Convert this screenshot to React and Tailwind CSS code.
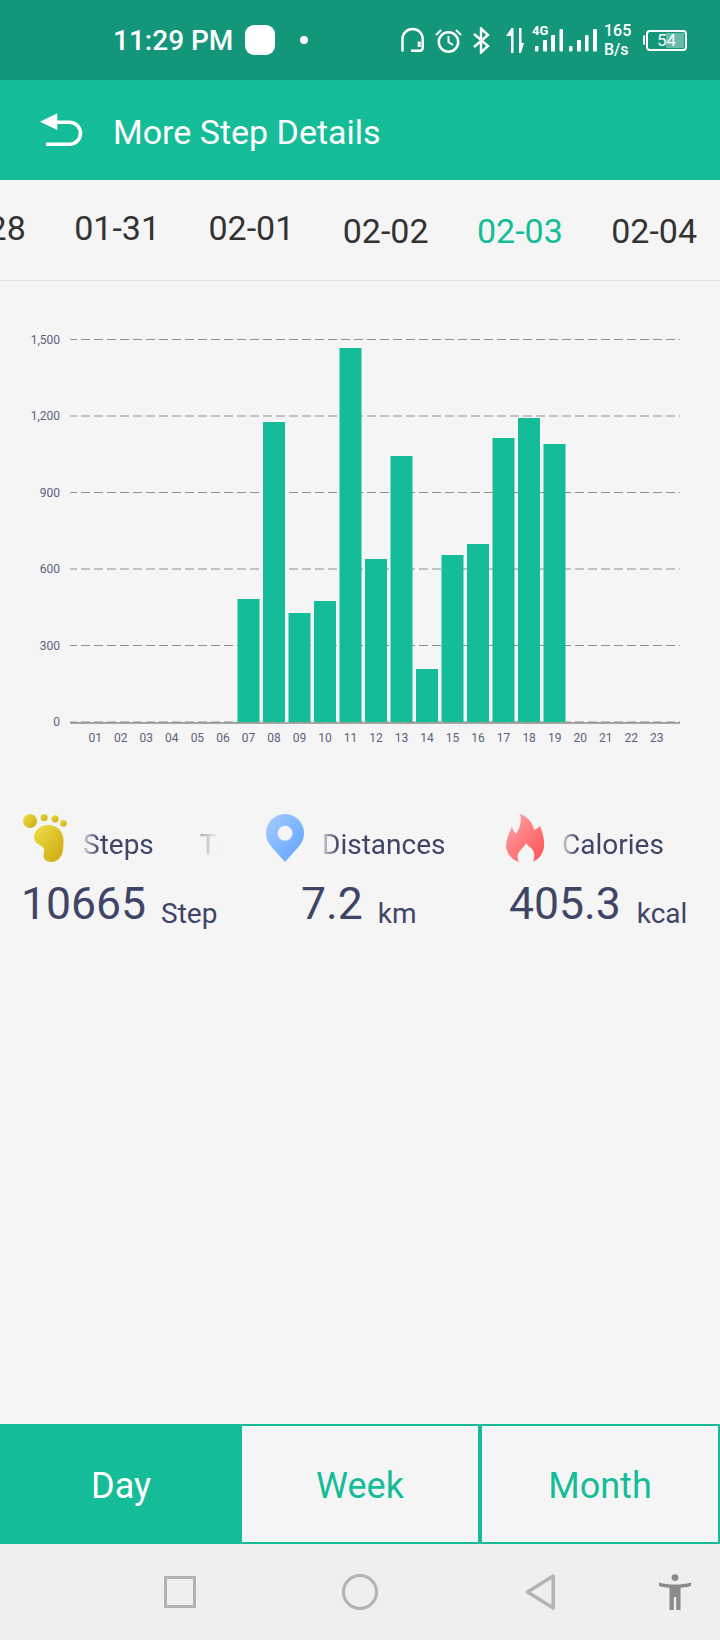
const DATES = [
  { label: '01-28', lift: true },
  { label: '01-31', lift: true },
  { label: '02-01', lift: true },
  { label: '02-02' },
  { label: '02-03', active: true },
  { label: '02-04' },
]

// bar tops in page pixels, hours 07 to 19
const BAR_TOPS = [599, 422, 613, 601, 348, 559, 456, 669, 555, 544, 438, 418, 444]
const Y_LABELS = ['1,500', '1,200', '900', '600', '300', '0']
const CHART_TOP = 281
const BASE_Y = 722 - CHART_TOP

function StatusIcons() {
  return (
    <div className="ml-auto mr-[33px] flex items-center">
      {/* headset */}
      <svg width="24" height="26" viewBox="0 0 24 26" fill="none" stroke="white" strokeWidth="2.5">
        <path d="M1.5 24.5V12A10.1 10.1 0 0 1 21.7 12V20.5C21.7 22.5 20.7 23.7 18.7 23.7H10" />
        <path d="M18.2 14.5V20" strokeWidth="3" />
      </svg>
      {/* alarm */}
      <svg className="ml-[10px]" width="27" height="25" viewBox="0 0 27 25" fill="none" stroke="white" strokeWidth="2.5">
        <circle cx="13.5" cy="14" r="9.7" />
        <path d="M13.5 8V14L18 17" strokeWidth="2" />
        <path d="M1 7L6 2M26 7L21 2" strokeWidth="2" />
      </svg>
      {/* bluetooth */}
      <svg className="ml-[11px]" width="17" height="27" viewBox="0 0 17 27" fill="none" stroke="white" strokeWidth="2.4">
        <path d="M1 7L15 19L8 25.5V1.5L15 8L1 20" />
      </svg>
      {/* data arrows */}
      <svg className="ml-4" width="18" height="25" viewBox="0 0 18 25" fill="white">
        <path d="M5.5 0L0 8H5V25H7.5V0Z" />
        <path d="M13 0H15.5V15H18L15 25H13Z" />
      </svg>
      {/* signal */}
      <svg className="ml-2 -mt-[2px]" width="66" height="28" viewBox="0 0 66 28" fill="white">
        <text x="0" y="10" fontSize="13" fontWeight="700">4G</text>
        <rect x="3" y="21" width="3.5" height="5.5" rx="1" />
        <rect x="11" y="15" width="4" height="11.5" rx="1" />
        <rect x="19" y="10" width="4" height="16.5" rx="1" />
        <rect x="27.5" y="4" width="3.5" height="22.5" rx="1" />
        <rect x="37" y="21" width="3.5" height="5.5" rx="1" />
        <rect x="45" y="15" width="4" height="11.5" rx="1" />
        <rect x="53" y="10" width="3.5" height="16.5" rx="1" />
        <rect x="61" y="4" width="4" height="22.5" rx="1" />
      </svg>
      <div className="ml-[6px] w-[27px] whitespace-nowrap text-[16px] font-medium leading-[19px] text-white">
        <div>165</div>
        <div>B/s</div>
      </div>
      {/* battery */}
      <div className="ml-[12px] flex items-center">
        <div className="h-[10px] w-[2px] rounded-l-sm bg-white" />
        <div className="relative ml-[1px] flex h-[21px] w-[41px] items-center rounded-[4px] border-2 border-white">
          <div className="absolute bottom-[1px] left-[18px] right-[1px] top-[1px] bg-white/35" />
          <span className="relative ml-[9px] text-[17px] leading-none text-white">54</span>
        </div>
      </div>
    </div>
  )
}

function BarChart() {
  return (
    <svg className="block w-full" width="720" height="480" viewBox="0 0 720 480">
      {Y_LABELS.map((label, i) => {
        const y = 339.5 + i * 76.5 - CHART_TOP
        return (
          <g key={label}>
            <line x1="70" x2="680" y1={y} y2={y} stroke="#8f8f8f" strokeWidth="1" strokeDasharray="9 4" strokeDashoffset="2" />
            <text x="60" y={y + 4} textAnchor="end" fontSize="12" fill="#5d6180">{label}</text>
          </g>
        )
      })}
      <line x1="70" x2="680" y1={BASE_Y + 1} y2={BASE_Y + 1} stroke="#8c8c8c" strokeWidth="1.5" />
      {BAR_TOPS.map((top, i) => (
        <rect
          key={i}
          x={237.5 + i * 25.5}
          y={top - CHART_TOP}
          width="22"
          height={722 - top}
          fill="#14bc97"
        />
      ))}
      {Array.from({ length: 23 }, (_, i) => (
        <text key={i} x={95.3 + i * 25.52} y={742 - CHART_TOP} textAnchor="middle" fontSize="12" fill="#5d6180">
          {String(i + 1).padStart(2, '0')}
        </text>
      ))}
    </svg>
  )
}

function FootIcon() {
  return (
    <svg width="44" height="48" viewBox="0 0 44 48">
      <defs>
        <linearGradient id="foot" x1="0" y1="0" x2="1" y2="1">
          <stop offset="0" stopColor="#ebe04a" />
          <stop offset="1" stopColor="#cda70c" />
        </linearGradient>
      </defs>
      <g fill="url(#foot)">
        <circle cx="7" cy="7" r="7" />
        <circle cx="21" cy="3.6" r="3.6" />
        <circle cx="32" cy="4.8" r="3.6" />
        <circle cx="40.3" cy="9.3" r="3.4" />
        <path d="M11 22C12 15 19 11 25 11C34 11 40.5 17 40.5 27C40.5 33 40 37 39 40C37 45 33 48 28.5 48C23 48 20 45 20.5 41C21 37 22 35.5 20 33C17 31 10.5 29 11 22Z" />
      </g>
    </svg>
  )
}

function PinIcon() {
  return (
    <svg width="38" height="48" viewBox="0 0 38 48">
      <defs>
        <linearGradient id="pin" x1="0" y1="0" x2="1" y2="1">
          <stop offset="0" stopColor="#a8ccff" />
          <stop offset="1" stopColor="#5ba2ff" />
        </linearGradient>
      </defs>
      <path d="M19 0A19 19 0 0 1 38 19C38 26 35 30 31 34.5L19 48L7 34.5C3 30 0 26 0 19A19 19 0 0 1 19 0Z" fill="url(#pin)" />
      <circle cx="19" cy="19.3" r="7.5" fill="#f5f5f5" />
    </svg>
  )
}

function FlameIcon() {
  return (
    <svg width="38" height="48" viewBox="0 0 38 48">
      <defs>
        <linearGradient id="flame" x1="0" y1="0" x2="1" y2="1">
          <stop offset="0" stopColor="#ffa6a8" />
          <stop offset="1" stopColor="#ff5053" />
        </linearGradient>
      </defs>
      <path
        d="M14 0C22 3 27 9 28 16C30 15 32 14 34 12C37 19 38.5 26 38 33C37 40 33 45 27 47.5C29 43 29 39 26 35C24 33 21 31 20 29C19 32 15 35 13 38C11 41 11 44 13 48C6 46 1 40 0 33C0 26 3 19 6 13C7 16 8 18 10 20C14 14 16 7 14 0Z"
        fill="url(#flame)"
      />
    </svg>
  )
}

function Stat({ icon, title, value, unit, className, titleClass, valueClass, unitClass }) {
  return (
    <div className={className}>
      <div className="flex h-12 items-start">
        {icon}
        <div className={`mt-[15px] overflow-hidden whitespace-nowrap text-[28px] leading-8 ${titleClass}`}>
          {title}
        </div>
      </div>
      <div className={`mt-4 flex items-baseline whitespace-nowrap ${valueClass}`}>
        <span className="text-[44.5px] leading-[52px]">{value}</span>
        <span className={`translate-y-1 text-[28px] ${unitClass}`}>{unit}</span>
      </div>
    </div>
  )
}

export default function App() {
  return (
    <div className="flex h-[1640px] w-[720px] flex-col overflow-hidden bg-[#f5f5f5] font-[Roboto,sans-serif]">
      {/* Status bar */}
      <div className="flex h-20 shrink-0 items-center bg-[#13967a] pl-[113px]">
        <span className="mt-[2px] text-[28px] font-medium leading-none text-white">11:29 PM</span>
        <div className="ml-3 h-[30px] w-[30px] rounded-[9px] bg-white" />
        <div className="ml-[25px] h-2 w-2 rounded-full bg-white" />
        <StatusIcons />
      </div>

      {/* Header */}
      <div className="flex h-[100px] shrink-0 items-center bg-[#14bc97] pl-10">
        <svg width="43" height="34" viewBox="0 0 43 34" fill="none">
          <path d="M0 8.7L17.3 0.3V17Z" fill="white" />
          <path d="M15 9.3H29.5A11 11 0 0 1 29.5 31.3H6" stroke="white" strokeWidth="3.6" />
        </svg>
        <span className="ml-[30px] mt-[3px] text-[34px] leading-none text-white">More Step Details</span>
      </div>

      {/* Date strip */}
      <div className="flex h-[101px] shrink-0 items-center overflow-hidden border-b border-[#e2e2e2] pt-[2px]">
        <div className="flex -translate-x-[60px] items-center gap-[48.4px] whitespace-nowrap text-[34px]">
          {DATES.map((d) => (
            <span
              key={d.label}
              className={`${d.active ? 'text-[#14bc97]' : 'text-[#333333]'} ${d.lift ? '-translate-y-[3px]' : ''}`}
            >
              {d.label}
            </span>
          ))}
        </div>
      </div>

      <BarChart />

      {/* Stats */}
      <div className="mt-[53px] flex pl-[23px] text-[#3f4566]">
        <Stat
          className="w-[243px]"
          icon={<FootIcon />}
          title={<>Steps<span className="ml-[46px]">Today</span></>}
          titleClass="ml-4 w-[135px] [mask-image:linear-gradient(to_right,rgba(0,0,0,0.2),black_16px,black_96px,rgba(0,0,0,0.35)_120px,transparent_135px)]"
          value="10665"
          valueClass="-ml-[2px]"
          unitClass="ml-[15px]"
          unit="Step"
        />
        <Stat
          className="w-[240px]"
          icon={<PinIcon />}
          title="Distances"
          titleClass="ml-[18px] [mask-image:linear-gradient(to_right,rgba(0,0,0,0.2),black_16px)]"
          value="7.2"
          valueClass="pl-[35px]"
          unitClass="ml-[15px]"
          unit="km"
        />
        <Stat
          className="flex-1"
          icon={<FlameIcon />}
          title="Calories"
          titleClass="ml-[18px] [mask-image:linear-gradient(to_right,rgba(0,0,0,0.2),black_16px)]"
          value="405.3"
          valueClass="pl-[3px]"
          unitClass="ml-4"
          unit="kcal"
        />
      </div>

      <div className="flex-1" />

      {/* Range tabs */}
      <div className="flex h-[120px] shrink-0 border-y-2 border-[#14bc97] text-[36px] leading-none">
        <div className="flex w-[242px] items-center justify-center bg-[#14bc97] pt-1 text-white">Day</div>
        <div className="flex w-[240px] items-center justify-center border-r-4 border-[#14bc97] pt-1 text-[#14bc97]">Week</div>
        <div className="flex flex-1 items-center justify-center border-r-2 border-[#14bc97] pt-1 text-[#14bc97]">Month</div>
      </div>

      {/* Nav bar */}
      <div className="flex h-24 shrink-0 items-center bg-[#efefef] pl-[164px]">
        <div className="h-8 w-8 border-[3.5px] border-[#b3b3b3]" />
        <div className="ml-[146px] h-9 w-9 rounded-full border-[3.5px] border-[#b3b3b3]" />
        <svg className="ml-[147px]" width="30" height="36" viewBox="0 0 30 36" fill="none">
          <path d="M28.2 2L2.5 18L28.2 34Z" stroke="#b3b3b3" strokeWidth="3.5" strokeLinejoin="round" />
        </svg>
        <svg className="ml-[104px]" width="32" height="36" viewBox="0 0 32 36" fill="#8a8a8a">
          <circle cx="16" cy="3.6" r="3.4" />
          <path d="M0 8.5C5 10 10 10.5 16 10.5C22 10.5 27 10 32 8.5L32 12C28 13 25 13.5 21.5 13.7V36H17.2V23H14.8V36H10.5V13.7C7 13.5 4 13 0 12Z" />
        </svg>
      </div>
    </div>
  )
}
